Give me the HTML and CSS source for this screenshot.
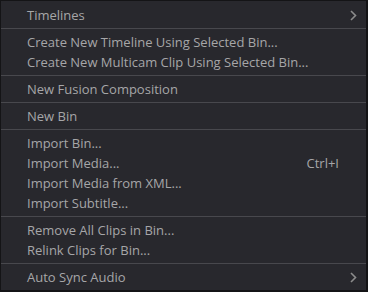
FILE: index.html
```html
<!DOCTYPE html>
<html lang="en">
<head>
    <meta charset="UTF-8">
    <title>Bin Menu</title>
    <link rel="stylesheet" href="styles.css">
</head>
<body>
    <div class="menu">
        <div class="menu-item">
            <span class="label">Timelines</span>
            <svg class="arrow" width="7" height="11" viewBox="0 0 7 11"><polyline points="1,1 5.5,5.5 1,10" fill="none" stroke="#8c8c8c" stroke-width="1.6"/></svg>
        </div>
        <div class="separator"></div>
        <div class="menu-item"><span class="label">Create New Timeline Using Selected Bin...</span></div>
        <div class="menu-item"><span class="label">Create New Multicam Clip Using Selected Bin...</span></div>
        <div class="separator"></div>
        <div class="menu-item"><span class="label">New Fusion Composition</span></div>
        <div class="separator"></div>
        <div class="menu-item"><span class="label">New Bin</span></div>
        <div class="separator"></div>
        <div class="menu-item"><span class="label">Import Bin...</span></div>
        <div class="menu-item">
            <span class="label">Import Media...</span>
            <span class="shortcut">Ctrl+I</span>
        </div>
        <div class="menu-item"><span class="label">Import Media from XML...</span></div>
        <div class="menu-item"><span class="label">Import Subtitle...</span></div>
        <div class="separator"></div>
        <div class="menu-item"><span class="label">Remove All Clips in Bin...</span></div>
        <div class="menu-item"><span class="label">Relink Clips for Bin...</span></div>
        <div class="separator"></div>
        <div class="menu-item">
            <span class="label">Auto Sync Audio</span>
            <svg class="arrow" width="7" height="11" viewBox="0 0 7 11"><polyline points="1,1 5.5,5.5 1,10" fill="none" stroke="#8c8c8c" stroke-width="1.6"/></svg>
        </div>
    </div>
</body>
</html>
```

FILE: styles.css
```css
* {
    margin: 0;
    padding: 0;
    box-sizing: border-box;
}

body {
    font-family: "Open Sans", sans-serif;
    background: #111113;
}

.menu {
    width: 368px;
    height: 292px;
    background: #28282d;
    border-style: solid;
    border-color: #141416;
    border-width: 1px 2px 2px 1px;
    padding: 4px 0 3px;
    color: #a6a6a8;
    font-size: 13px;
}

.menu-item {
    display: flex;
    align-items: center;
    height: 20px;
    line-height: 20px;
    padding: 0 9px 0 26px;
    white-space: nowrap;
}

.label {
    flex: 1;
}

.shortcut {
    margin-right: 18px;
}

.arrow {
    display: block;
}

.separator {
    height: 1px;
    margin: 3px 0;
    background: #48484d;
}
```
